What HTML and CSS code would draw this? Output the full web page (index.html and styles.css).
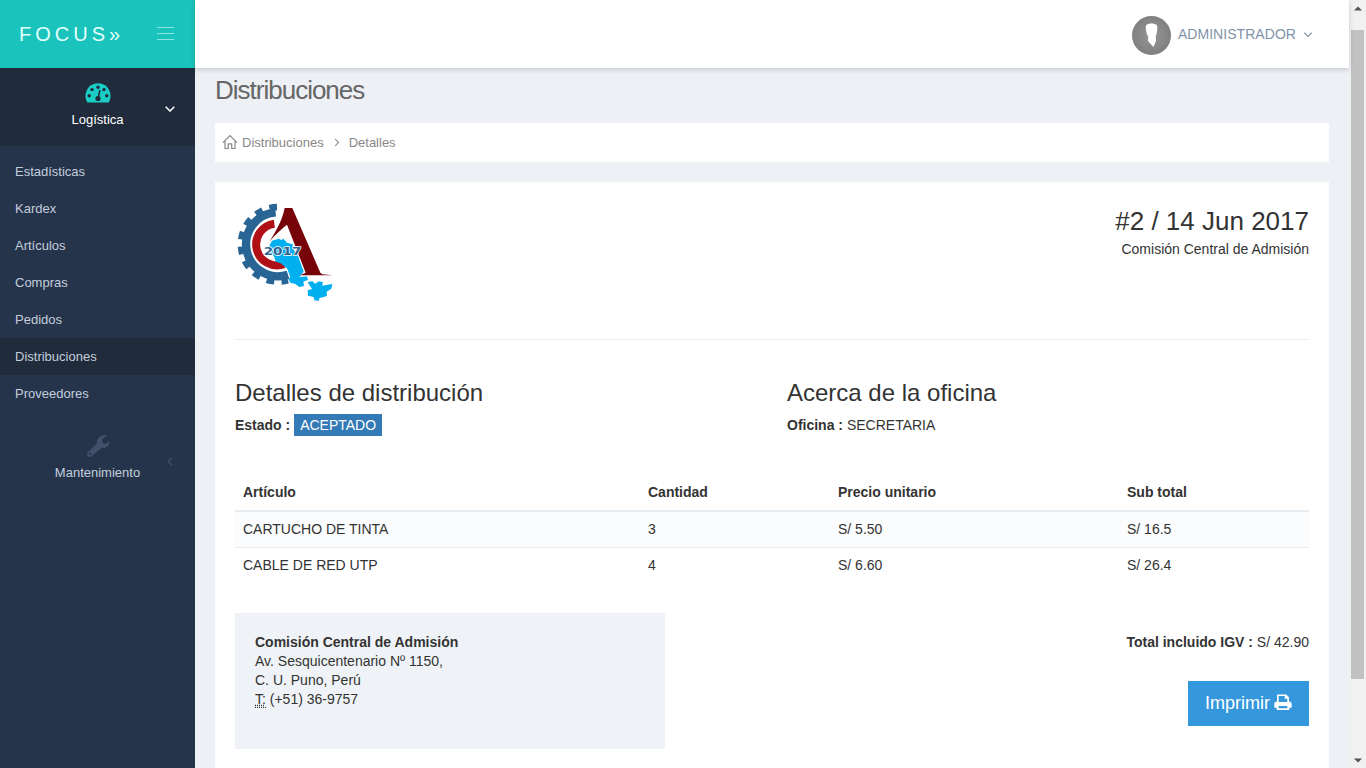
FILE: index.html
```html
<!DOCTYPE html>
<html lang="es">
<head>
<meta charset="utf-8">
<title>Distribuciones</title>
<link rel="stylesheet" href="styles.css">
</head>
<body>
<aside class="sidebar">
  <div class="brand">
    <span class="brand-name">FOCUS»</span>
    <svg class="burger" width="17" height="14" viewBox="0 0 17 14"><path d="M0 .5h17M0 6.500h17M0 12.500h17" stroke="#8ee5e0"/></svg>
  </div>
  <div class="group group-open">
    <svg width="26" height="20" viewBox="0 0 26 20"><path fill="#1acdc4" d="M.5 13C.5 5.500 6 .2 13 .2S25.500 5.500 25.500 13c0 2.500-.7 4.700-1.800 6.500H2.300C1.200 17.700.5 15.500.5 13z"/><g fill="#202b3b"><circle cx="4.200" cy="12.700" r="1.700"/><circle cx="7" cy="6.600" r="1.700"/><circle cx="13" cy="4.200" r="1.700"/><circle cx="19" cy="6.600" r="1.700"/><circle cx="21.800" cy="12.700" r="1.700"/><circle cx="13" cy="15.500" r="2.600"/></g><path d="M13.200 15l1.700-8" stroke="#202b3b" stroke-width="1.500"/></svg>
    <span class="group-name">Logística</span>
    <svg class="group-arrow" width="10" height="6" viewBox="0 0 10 6"><path d="M.7.7L5 5 9.300.7" fill="none" stroke="#fff" stroke-width="1.500"/></svg>
  </div>
  <nav class="menu">
    <a>Estadísticas</a><a>Kardex</a><a>Artículos</a><a>Compras</a><a>Pedidos</a><a class="active">Distribuciones</a><a>Proveedores</a>
  </nav>
  <div class="group group-closed">
    <svg width="24" height="24" viewBox="0 0 24 24"><path fill="#42506b" fill-rule="evenodd" d="M11 9.500C10.500 4.200 15 .3 20 1.300l1.200.8-5 3v3.300l3 1.600 4-2.400c.6 3.500-2.800 7-7.700 6.200L5.300 22.600c-2.300 1.800-5.600-1.200-3.800-3.800zM4.200 18.800a1.100 1.100 0 1 0 .1 2.200 1.100 1.100 0 0 0-.1-2.200z"/></svg>
    <span class="group-name">Mantenimiento</span>
    <svg class="group-arrow" width="6" height="9" viewBox="0 0 6 9"><path d="M5 .6L1 4.500 5 8.400" fill="none" stroke="#42506b" stroke-width="1.200"/></svg>
  </div>
</aside>
<div class="main">
  <header class="topbar">
    <svg class="avatar" width="39" height="39" viewBox="0 0 39 39"><defs><radialGradient id="av"><stop offset="0" stop-color="#969696"/><stop offset="1" stop-color="#808080"/></radialGradient></defs><circle cx="19.500" cy="19.500" r="19.500" fill="url(#av)"/><path fill="#fff" d="M13.800 11c0-2.600 2.300-3.500 5.700-3.500s5.800 1 5.800 3.700c0 2-.1 3-.3 4.500-.3 2-.8 3.400-1.300 4.800l.4 4.300-2.700 6.200-5.400-6 .2-4.500c-1.800-2.600-2.400-6-2.400-9.500z"/></svg>
    <span class="user">ADMINISTRADOR</span>
    <svg width="8" height="6" viewBox="0 0 8 6"><path d="M.4.700L4 4.600 7.600.7" fill="none" stroke="#8797a9" stroke-width="1.300"/></svg>
  </header>
  <main class="content">
    <h1>Distribuciones</h1>
    <div class="crumbs">
      <svg class="home" width="16" height="16" viewBox="0 0 16 16"><path d="M1 8.600L8 1.500l7 7.100M3 7v7.500h3.300V9.800h3.400v4.700H13V7" fill="none" stroke="#888" stroke-width="1.200"/></svg>
      <span>Distribuciones</span>
      <svg class="crumb-sep" width="6" height="9" viewBox="0 0 6 9"><path d="M1 .9l3.600 3.600L1 8.100" fill="none" stroke="#999" stroke-width="1.200"/></svg>
      <span>Detalles</span>
    </div>
    <section class="invoice">
      <div class="invoice-head">
        <svg class="logo" width="100" height="115" viewBox="30 0 300 345">
          <g fill="none"><path d="M156 36A112 112 0 1 0 189 256" stroke="#286594" stroke-width="19" stroke-dasharray="23 21.700"/><path d="M152 52A96 96 0 1 0 189 239" stroke="#286594" stroke-width="25"/><path d="M148 86A63 63 0 1 0 177 208" stroke="#b00f16" stroke-width="24"/></g>
          <path fill="#00aff0" d="M134 150l7-13 20-6 8 4 6-4 11 12 17 5 3 16 18 22 27 50-5 10 3 8-14 6 2 13-14 3-12-9-15-4-6-10 6-6-9-26-20-16-15-5-4-14-14-22z"/>
          <path fill="#00aff0" d="M248 262l14-4 8 8 12-7 12 3-3 10 31-5-3 14-14 9 1 13-23 7-2 8-13-2-2-10-17-4-1-16 13-4z"/>
          <path fill="#fff" d="M172 36h33l82 193 4 12-68 5 13-16-49-138-60 56 27-48z"/>
          <path fill="#760307" d="M180 39h22l84 194 6 5 32 3h-99l17-8-56-144c-17 14-35 29-52 50 20-32 38-64 45-100z"/>
          <text class="logo-year" x="116" y="181" textLength="113" lengthAdjust="spacingAndGlyphs">2017</text>
        </svg>
        <div class="invoice-id"><div class="invoice-no">#2 / 14 Jun 2017</div><div>Comisión Central de Admisión</div></div>
      </div>
      <div class="details">
        <div><h2>Detalles de distribución</h2><b>Estado :</b> <span class="badge">ACEPTADO</span></div>
        <div><h2>Acerca de la oficina</h2><b>Oficina :</b> SECRETARIA</div>
      </div>
      <table>
        <colgroup><col class="c1"><col class="c2"><col class="c3"><col class="c4"></colgroup>
        <thead><tr><th>Artículo</th><th>Cantidad</th><th>Precio unitario</th><th>Sub total</th></tr></thead>
        <tbody><tr><td>CARTUCHO DE TINTA</td><td>3</td><td>S/ 5.50</td><td>S/ 16.5</td></tr>
        <tr><td>CABLE DE RED UTP</td><td>4</td><td>S/ 6.60</td><td>S/ 26.4</td></tr></tbody>
      </table>
      <div class="invoice-foot">
        <address><b>Comisión Central de Admisión</b><br>Av. Sesquicentenario Nº 1150,<br>C. U. Puno, Perú<br><span class="abbr">T:</span> (+51) 36-9757</address>
        <div class="totals">
          <div><b>Total incluido IGV :</b> S/ 42.90</div>
          <div class="print">Imprimir <svg width="18" height="17" viewBox="0 0 18 17"><path fill="#fff" fill-rule="evenodd" d="M3.500.5h8.700L15 3.300v4.200c1.700 0 2.700 1 2.700 2.700v3.600h-2.400V16H2.700v-2.200H.3v-3.600c0-1.700 1-2.700 2.700-2.700V1zM4.700 2.100v6h8.600V4.800H10.700V2.100zm0 9.900v2.300h8.600V12z"/></svg></div>
        </div>
      </div>
    </section>
  </main>
</div>
<div class="scrollbar"><svg width="8" height="5" viewBox="0 0 8 5"><path d="M0 4.500L4 .5l4 4z" fill="#505050"/></svg><div class="thumb"></div><svg width="8" height="5" viewBox="0 0 8 5"><path d="M0 .5h8l-4 4z" fill="#505050"/></svg></div>
</body>
</html>
```
FILE: styles.css
```css
* { box-sizing: border-box; }
body { margin: 0; height: 768px; overflow: hidden; display: flex; font: 14px/20px "Liberation Sans", Arial, sans-serif; color: #333; background: #edf0f5; }
svg { display: block; flex: none; }
.sidebar { width: 195px; background: #26344b; color: #c3cedd; font-size: 13px; flex: none; }
.brand { height: 68px; padding: 0 21px 0 19px; display: flex; align-items: center; justify-content: space-between; background: #1ac3bb; color: #e3fffd; }
.brand-name { font-size: 20px; letter-spacing: 4px; }
.group { position: relative; display: flex; flex-direction: column; align-items: center; }
.group-open { height: 78px; padding-top: 15px; background: #202b3b; color: #fff; }
.group-open .group-name { margin-top: 7px; }
.group-arrow { position: absolute; right: 20px; top: 38px; }
.menu { padding-top: 7px; }
.menu a { display: block; height: 37px; padding-left: 15px; line-height: 37px; }
.menu .active { background: #202b3b; }
.group-closed { padding-top: 22px; }
.group-closed .group-name { margin-top: 5px; }
.group-closed .group-arrow { right: 22px; top: 45px; }
.main { flex: 1; min-width: 0; display: flex; flex-direction: column; }
.topbar { position: relative; height: 68px; flex: none; display: flex; align-items: center; justify-content: flex-end; padding: 2px 37px 0 0; background: #fff; box-shadow: 0 2px 5px rgba(0,0,0,.16); color: #7f93a9; }
.user { margin: -2px 8px 0 7px; letter-spacing: .05px; }
.content { flex: 1; padding: 0 20px; display: flex; flex-direction: column; min-height: 0; }
h1 { margin: 7px 0 18px; font-size: 26px; line-height: 30px; font-weight: 400; letter-spacing: -1px; color: #666; }
.crumbs { height: 39px; flex: none; display: flex; align-items: center; padding-left: 7px; background: #fff; color: #888; font-size: 13px; }
.home { margin-top: -2px; }
.crumbs span { margin-left: 4px; }
.crumbs .crumb-sep { margin: 0 5px 0 10px; }
.invoice { flex: 1; margin-top: 20px; padding: 13px 20px 0; background: #fff; min-height: 0; }
.invoice-head { display: flex; justify-content: space-between; height: 145px; border-bottom: 1px solid #eee; }
.logo-year { font: bold 34px "DejaVu Sans", sans-serif; fill: #2a6494; stroke: #fff; stroke-width: 4px; paint-order: stroke; }
.invoice-id { padding-top: 10px; text-align: right; }
.invoice-no { font-size: 26px; line-height: 32px; margin-bottom: 2px; }
.details { display: grid; grid-template-columns: 552px 1fr; padding-top: 40px; height: 133px; }
h2 { margin: 0 0 9px; font-size: 24px; line-height: 26px; font-weight: 400; }
.badge { display: inline-block; padding: 0 6px; line-height: 22px; margin-top: -1px; background: #337ab7; color: #fff; }
table { width: 100%; table-layout: fixed; border-collapse: separate; border-spacing: 0; }
.c1 { width: 405px; } .c2 { width: 190px; } .c3 { width: 289px; } .c4 { width: 190px; }
th { text-align: left; height: 39px; padding: 0 8px; border-bottom: 2px solid #e7ecf1; }
td { height: 35px; padding: 0 8px 2px; }
tbody tr:first-child td { height: 36px; background: #fbfcfd; border-bottom: 1px solid #e7ecf1; }
.invoice-foot { display: flex; justify-content: space-between; margin-top: 30px; }
address { width: 430px; height: 136px; padding: 20px; font-style: normal; line-height: 19px; background: #eff3f7; }
.abbr { border-bottom: 1px dotted #333; text-decoration: underline dotted; }
.totals { padding-top: 19px; text-align: right; }
.print { display: flex; align-items: center; justify-content: center; gap: 4px; width: 121px; height: 45px; padding-bottom: 2px; margin: 29px 0 0 auto; background: #3598dc; color: #fff; font-size: 18px; }
.scrollbar { width: 17px; flex: none; display: flex; flex-direction: column; align-items: center; background: #f1f1f1; padding: 6px 0 5px; }
.thumb { width: 13px; height: 649px; margin: 19px 0 auto; background: #c1c1c1; }
```
